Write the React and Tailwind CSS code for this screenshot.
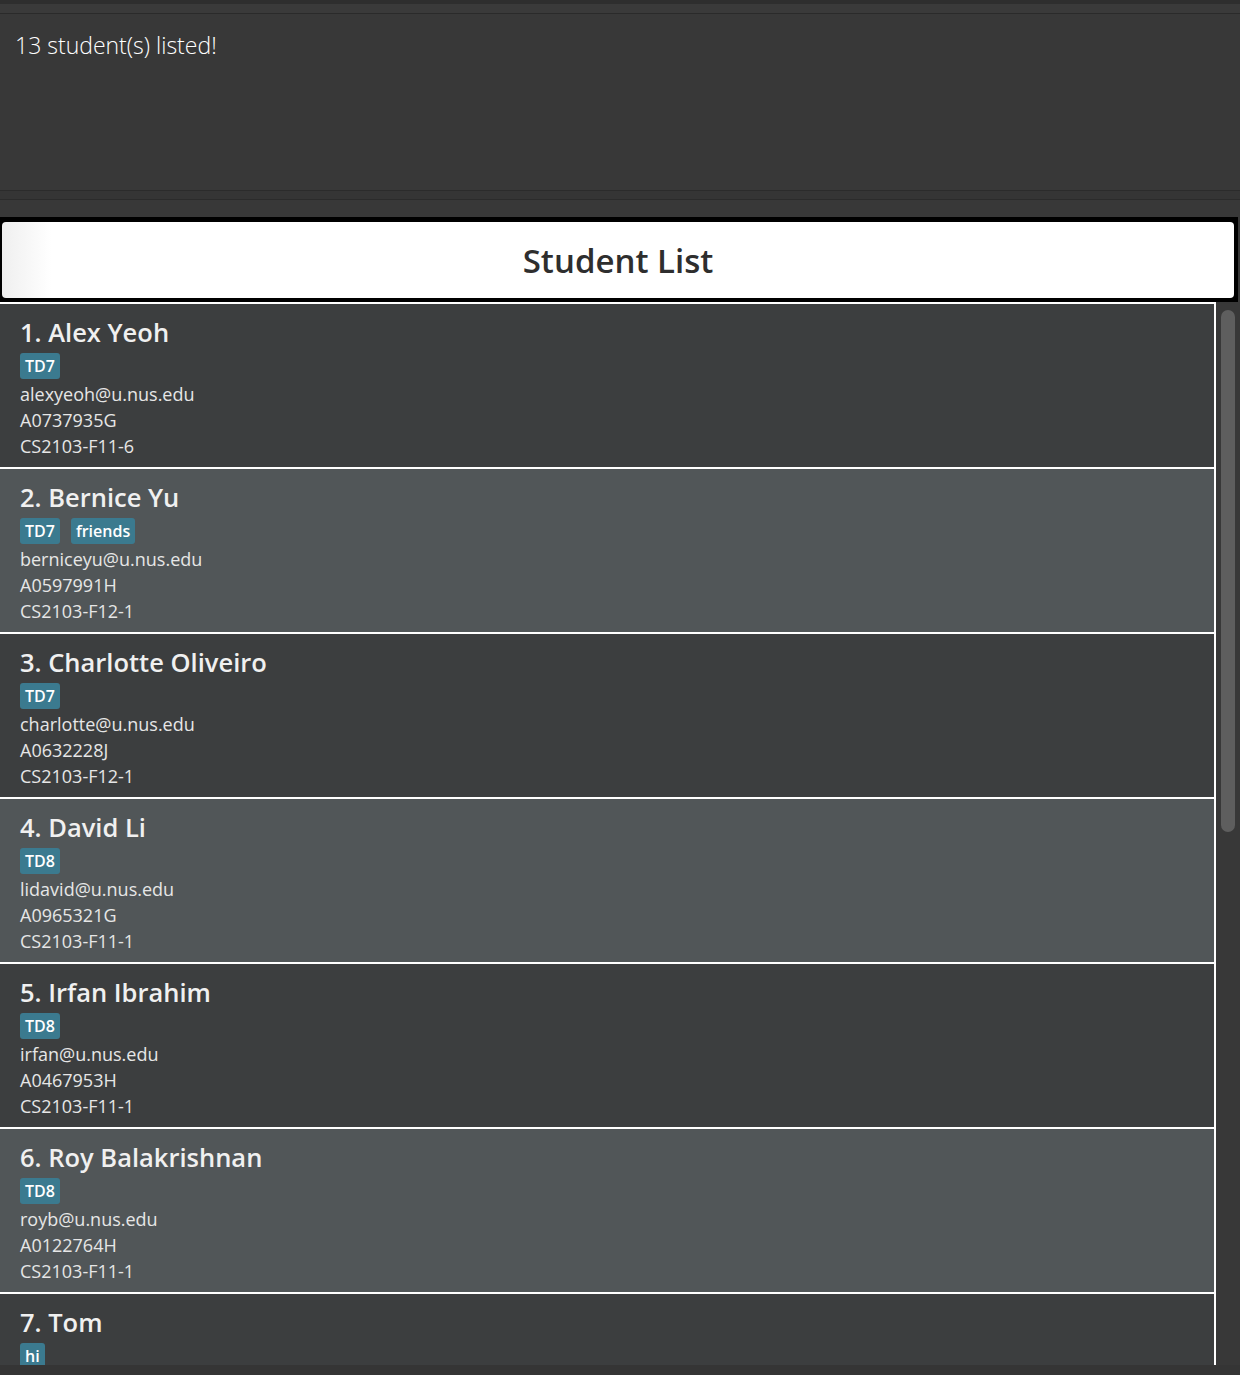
import React from 'react'

const students = [
  { name: 'Alex Yeoh', tags: ['TD7'], email: 'alexyeoh@u.nus.edu', id: 'A0737935G', group: 'CS2103-F11-6' },
  { name: 'Bernice Yu', tags: ['TD7', 'friends'], email: 'berniceyu@u.nus.edu', id: 'A0597991H', group: 'CS2103-F12-1' },
  { name: 'Charlotte Oliveiro', tags: ['TD7'], email: 'charlotte@u.nus.edu', id: 'A0632228J', group: 'CS2103-F12-1' },
  { name: 'David Li', tags: ['TD8'], email: 'lidavid@u.nus.edu', id: 'A0965321G', group: 'CS2103-F11-1' },
  { name: 'Irfan Ibrahim', tags: ['TD8'], email: 'irfan@u.nus.edu', id: 'A0467953H', group: 'CS2103-F11-1' },
  { name: 'Roy Balakrishnan', tags: ['TD8'], email: 'royb@u.nus.edu', id: 'A0122764H', group: 'CS2103-F11-1' },
  { name: 'Tom', tags: ['hi'], email: 'tom@u.nus.edu', id: 'A0123456X', group: 'CS2103-F11-1' },
]

function StudentCard({ student, index }) {
  const even = index % 2 === 1
  return (
    <div
      className={
        'h-[165px] shrink-0 border-b-2 border-white pl-[20px] pt-[11px] ' +
        (even ? 'bg-[#515658]' : 'bg-[#3c3e3f]')
      }
    >
      <div className="text-[25.5px] leading-[34px] font-semibold text-[#f0f0f0]">
        {index + 1}. {student.name}
      </div>
      <div className="flex gap-[11px] mt-[4px] mb-[2px]">
        {student.tags.map((t) => (
          <span
            key={t}
            className="h-[26px] px-[5px] rounded-[3px] bg-[#3b7a8f] text-white text-[16px] font-semibold leading-[26px]"
          >
            {t}
          </span>
        ))}
      </div>
      <div className="text-[18px] leading-[26px] text-[#e6e6e6]">
        <div>{student.email}</div>
        <div>{student.id}</div>
        <div>{student.group}</div>
      </div>
    </div>
  )
}

export default function App() {
  return (
    <div
      className="w-[1240px] h-[1375px] bg-[#383838] flex flex-col overflow-hidden"
      style={{ fontFamily: '"Segoe UI", "Open Sans", "Noto Sans", sans-serif' }}
    >
      {/* top strip above result box */}
      <div className="h-[4px] bg-[#2e2e2e]" />
      <div className="h-[10px] bg-[#3a3a3a] border-b border-[#2a2a2a]" />

      {/* Result display */}
      <div className="h-[177px] px-[15px] pt-[20px] border-b border-[#2b2b2b]">
        <p className="text-[23px] leading-none font-light text-white">13 student(s) listed!</p>
      </div>
      <div className="h-[9px] bg-[#353535] border-b border-[#2b2b2b]" />
      <div className="h-[17px]" />

      {/* Header */}
      <div className="w-[1238px] bg-black pt-[5px] pb-[4px] pl-[2px] pr-[4px]">
        <div className="h-[76px] rounded-[4px] bg-linear-to-r from-[#efefef] to-white to-[4%] flex items-center justify-center">
          <span className="text-[33px] font-semibold text-[#2e2e2e] leading-none">Student List</span>
        </div>
      </div>

      {/* List */}
      <div className="flex h-[1063px]">
        <div className="w-[1216px] border-t-2 border-r-2 border-white flex flex-col overflow-hidden">
          {students.map((s, i) => (
            <StudentCard key={s.name} student={s} index={i} />
          ))}
        </div>
        <div className="flex-1 bg-[#383838] pt-[8px] pl-[5px] pr-[5px]">
          <div className="h-[522px] rounded-full bg-[#5e5e5e]" />
        </div>
      </div>
      <div className="flex-1 bg-[#353535]" />
    </div>
  )
}
